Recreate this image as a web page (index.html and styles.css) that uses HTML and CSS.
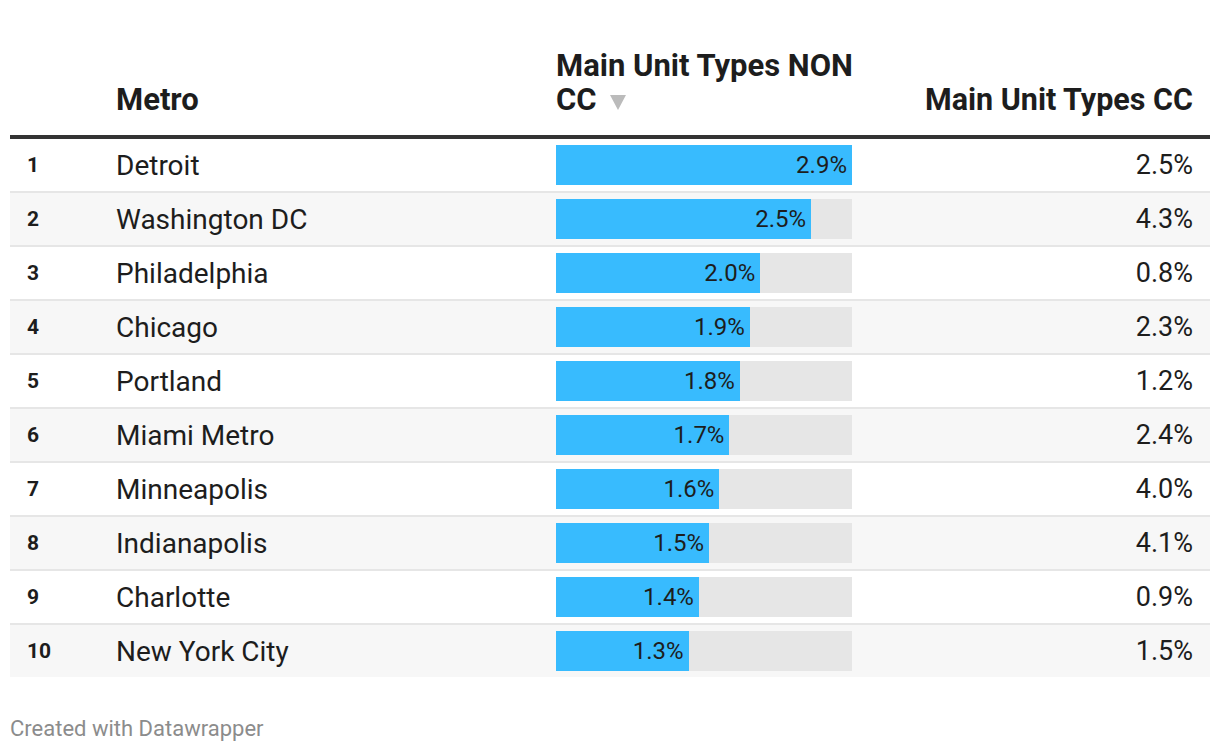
FILE: index.html
```html
<!DOCTYPE html>
<html>
<head>
<meta charset="utf-8">
<link rel="stylesheet" href="styles.css">
</head>
<body>
<div class="chart">
  <div class="table">
    <div class="row head">
      <div class="cell rank"></div>
      <div class="cell name">Metro</div>
      <div class="cell bar-col">Main Unit Types NON<br>CC <span class="sort"></span></div>
      <div class="cell val">Main Unit Types CC</div>
    </div>
    <div class="row"><div class="cell rank">1</div><div class="cell name">Detroit</div><div class="cell bar-col"><div class="track"><div class="fill" style="width:100%">2.9%</div></div></div><div class="cell val">2.5%</div></div>
    <div class="row alt"><div class="cell rank">2</div><div class="cell name">Washington DC</div><div class="cell bar-col"><div class="track"><div class="fill" style="width:86.2%">2.5%</div></div></div><div class="cell val">4.3%</div></div>
    <div class="row"><div class="cell rank">3</div><div class="cell name">Philadelphia</div><div class="cell bar-col"><div class="track"><div class="fill" style="width:69%">2.0%</div></div></div><div class="cell val">0.8%</div></div>
    <div class="row alt"><div class="cell rank">4</div><div class="cell name">Chicago</div><div class="cell bar-col"><div class="track"><div class="fill" style="width:65.5%">1.9%</div></div></div><div class="cell val">2.3%</div></div>
    <div class="row"><div class="cell rank">5</div><div class="cell name">Portland</div><div class="cell bar-col"><div class="track"><div class="fill" style="width:62.1%">1.8%</div></div></div><div class="cell val">1.2%</div></div>
    <div class="row alt"><div class="cell rank">6</div><div class="cell name">Miami Metro</div><div class="cell bar-col"><div class="track"><div class="fill" style="width:58.6%">1.7%</div></div></div><div class="cell val">2.4%</div></div>
    <div class="row"><div class="cell rank">7</div><div class="cell name">Minneapolis</div><div class="cell bar-col"><div class="track"><div class="fill" style="width:55.2%">1.6%</div></div></div><div class="cell val">4.0%</div></div>
    <div class="row alt"><div class="cell rank">8</div><div class="cell name">Indianapolis</div><div class="cell bar-col"><div class="track"><div class="fill" style="width:51.7%">1.5%</div></div></div><div class="cell val">4.1%</div></div>
    <div class="row"><div class="cell rank">9</div><div class="cell name">Charlotte</div><div class="cell bar-col"><div class="track"><div class="fill" style="width:48.3%">1.4%</div></div></div><div class="cell val">0.9%</div></div>
    <div class="row alt last"><div class="cell rank">10</div><div class="cell name">New York City</div><div class="cell bar-col"><div class="track"><div class="fill" style="width:44.8%">1.3%</div></div></div><div class="cell val">1.5%</div></div>
  </div>
  <div class="footer">Created with Datawrapper</div>
</div>
</body>
</html>
```
FILE: styles.css
```css
html, body {
  margin: 0;
  padding: 0;
  background: #ffffff;
}
body {
  font-family: Roboto, "Liberation Sans", sans-serif;
  color: #1d1d1d;
}
.chart {
  padding: 49px 10px 0 10px;
}
.table {
  display: flex;
  flex-direction: column;
  width: 1200px;
}
.row {
  display: grid;
  grid-template-columns: 106px 440px 296px 1fr;
  height: 52px;
  align-items: center;
  border-bottom: 2px solid #e6e6e6;
}
.row.alt {
  background: #f7f7f7;
}
.row.last {
  border-bottom: none;
}
.row.head {
  height: auto;
  align-items: end;
  border-bottom: 4px solid #333333;
  font-weight: 700;
  line-height: 34px;
}
.cell {
  font-size: 28px;
}
.head .cell {
  font-size: 31px;
  padding-bottom: 18px;
  white-space: nowrap;
}
.head .val {
  font-size: 30.5px;
}
.rank {
  padding-left: 17px;
  font-weight: 700;
  font-size: 21px;
}
.val {
  text-align: right;
  padding-right: 17px;
  font-size: 27px;
}
.sort {
  display: inline-block;
  width: 0;
  height: 0;
  margin-left: 6px;
  border-left: 8px solid transparent;
  border-right: 8px solid transparent;
  border-top: 15px solid #bbbbbb;
  vertical-align: 0;
}
.track {
  height: 40px;
  background: #e6e6e6;
  display: flex;
}
.fill {
  background: #38bbfe;
  height: 40px;
  display: flex;
  align-items: center;
  justify-content: flex-end;
  padding-right: 5px;
  box-sizing: border-box;
  font-size: 24px;
  color: #1d1d1d;
}
.footer {
  margin-top: 39px;
  font-size: 22px;
  color: #8c8c8c;
}
```
